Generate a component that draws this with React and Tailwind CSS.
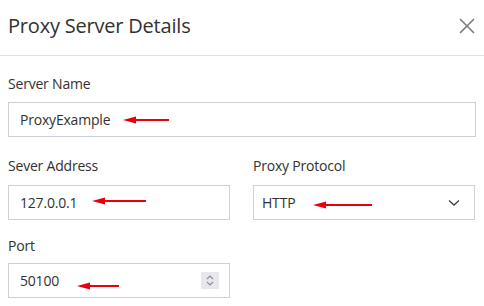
import React from "react";

function Arrow({ className, width }) {
  return (
    <svg className={className} width={width} height="8" viewBox={`0 0 ${width} 8`}>
      <polygon points={`0,4 13,0.5 13,7.5`} fill="#e8000b" />
      <rect x="11" y="3" width={width - 11} height="2" fill="#e8000b" />
    </svg>
  );
}

function Field({ children, className }) {
  return (
    <div className={"relative h-[35px] border border-[#cdd0d6] bg-white flex items-center " + className}>
      {children}
    </div>
  );
}

export default function App() {
  return (
    <div className="w-[484px] h-[306px] bg-white text-[#323130] overflow-hidden" style={{ fontFamily: "'Open Sans', 'Noto Sans', sans-serif" }}>
      <div className="h-[56px] flex items-center justify-between pl-[8px] pr-[9px] border-b border-[#e1e1e1]">
        <div className="text-[20px] leading-none tracking-[-0.2px] mt-[-3px]">Proxy Server Details</div>
        <svg width="16" height="16" viewBox="0 0 16 16" className="mt-[-4px]">
          <path d="M1 1 L15 15 M15 1 L1 15" stroke="#7a7a7a" strokeWidth="1.6" />
        </svg>
      </div>
      <div className="px-[8px] pr-[8px]">
        <div className="pt-[20px] text-[14px] leading-[16px] tracking-[-0.2px]">Server Name</div>
        <Field className="mt-[10px] w-[468px] pl-[11px]">
          <span className="text-[14px] tracking-[-0.2px]">ProxyExample</span>
          <Arrow className="absolute left-[114px] top-[13px]" width={46} />
        </Field>
        <div className="mt-[13px] flex gap-[24px]">
          <div className="w-[221px]">
            <div className="mt-[8px] text-[14px] leading-[16px] tracking-[-0.2px]">Sever Address</div>
            <Field className="mt-[11px] w-[222px] pl-[11px]">
              <span className="text-[14px] tracking-[-0.2px]">127.0.0.1</span>
              <Arrow className="absolute left-[83px] top-[11px]" width={54} />
            </Field>
          </div>
          <div className="w-[222px]">
            <div className="mt-[8px] text-[14px] leading-[16px] tracking-[-0.2px]">Proxy Protocol</div>
            <Field className="mt-[11px] w-[222px] justify-between pr-[14px] pl-[8px]">
              <span className="text-[14px] tracking-[-0.2px]">HTTP</span>
              <Arrow className="absolute left-[59px] top-[15px]" width={59} />
              <svg width="12" height="8" viewBox="0 0 12 8">
                <path d="M1 1.5 L6 6 L11 1.5" stroke="#444" strokeWidth="1.4" fill="none" />
              </svg>
            </Field>
          </div>
        </div>
        <div className="mt-[18px] text-[14px] leading-[16px] tracking-[-0.2px]">Port</div>
        <Field className="mt-[9px] w-[222px] justify-between pr-[10px] pl-[11px]">
          <span className="text-[14px] tracking-[-0.2px]">50100</span>
          <Arrow className="absolute left-[68px] top-[18px]" width={42} />
          <div className="w-[18px] h-[17px] bg-[#e8e8ec] flex flex-col items-center justify-center gap-[1px]">
            <svg width="8" height="5" viewBox="0 0 8 5"><path d="M1 4 L4 1 L7 4" stroke="#8a8a96" strokeWidth="1.1" fill="none" /></svg>
            <svg width="8" height="5" viewBox="0 0 8 5"><path d="M1 1 L4 4 L7 1" stroke="#8a8a96" strokeWidth="1.1" fill="none" /></svg>
          </div>
        </Field>
      </div>
    </div>
  );
}
